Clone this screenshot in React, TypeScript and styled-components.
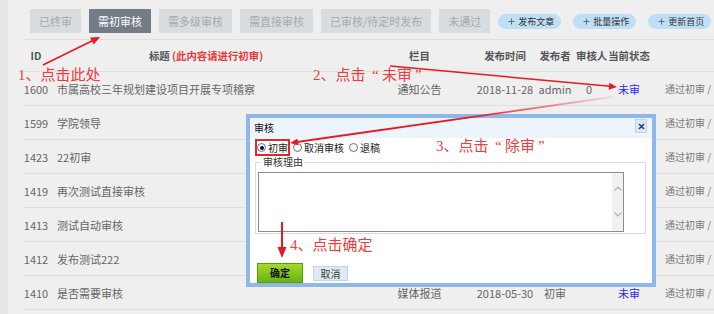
import React from 'react';
import styled, { createGlobalStyle } from 'styled-components';

const SANS = '"Noto Sans CJK SC", "Noto Sans", sans-serif';

const GlobalStyle = createGlobalStyle`
  html, body { margin: 0; padding: 0; background: #efefef; overflow: hidden; }
  body { font-family: ${SANS}; }
  *, *::before, *::after { box-sizing: border-box; }
`;

const Page = styled.div`
  position: relative;
  width: 714px;
  height: 314px;
  overflow: hidden;
  display: flex;
  background: #efefef;
`;

const Sidebar = styled.aside`
  width: 8px;
  flex: none;
  background: #e5e5e5;
`;

const Main = styled.main`
  flex: 1;
  min-width: 0;
  padding-top: 9px;
  display: flex;
  flex-direction: column;
`;

const Toolbar = styled.nav`
  display: flex;
  align-items: center;
  height: 24px;
  margin-left: 22px;
  padding-right: 6px;
  gap: 8px;
`;

const Tab = styled.button<{ $active?: boolean }>`
  height: 24px;
  margin: 0;
  padding: 0 9px;
  border: 0;
  font: 11px/24px ${SANS};
  white-space: nowrap;
  background: ${(p) => (p.$active ? '#737c87' : '#d9dcdf')};
  color: ${(p) => (p.$active ? '#ffffff' : '#a7a9ac')};
`;

const PillGroup = styled.div`
  margin-left: auto;
  display: flex;
  align-items: center;
  gap: 12px;
`;

const Pill = styled.button`
  height: 15px;
  margin: 0;
  padding: 0 7px 0 10px;
  border: 0;
  border-radius: 8px;
  background: #bfdff5;
  display: inline-flex;
  align-items: center;
  gap: 3px;
  font: 9px/15px ${SANS};
  color: #333;
  white-space: nowrap;
`;

const Table = styled.section`
  margin: 6px 0 0 15px;
  display: flex;
  flex-direction: column;
`;

const COLS = '26px 314px 113px 58px 42px 26px 54px 1fr';

const HeaderRow = styled.div`
  display: grid;
  grid-template-columns: ${COLS};
  align-items: center;
  height: 33px;
  border-top: 1px solid #dfdfdf;
  border-bottom: 1px solid #dfdfdf;
  font: bold 10.4px/14px ${SANS};
  color: #555;
`;

const Row = styled.div`
  display: grid;
  grid-template-columns: ${COLS};
  align-items: center;
  height: 34px;
  border-bottom: 1px solid #dedede;
  font: 11px/12px ${SANS};
  color: #666;
`;

const Cell = styled.div<{ $align?: 'left' | 'center'; $pad?: number }>`
  white-space: nowrap;
  text-align: ${(p) => p.$align ?? 'center'};
  padding-left: ${(p) => p.$pad ?? 0}px;
  overflow: visible;
`;

const RedNote = styled.span`
  color: #e83a3a;
`;

const Status = styled.span`
  color: #2b2bff;
`;

const OpText = styled.span`
  font-size: 10px;
  color: #7a7a7a;
`;

/* ---------- dialog ---------- */

const Dialog = styled.section`
  position: absolute;
  left: 246px;
  top: 114px;
  width: 410px;
  height: 173px;
  border: 4px solid #8fb8ea;
  background: #fff;
  display: flex;
  flex-direction: column;
  overflow: hidden;
  font-family: ${SANS};
`;

const DialogTitleBar = styled.header`
  height: 20px;
  flex: none;
  display: flex;
  align-items: flex-start;
  justify-content: space-between;
  padding: 0 5px 0 4px;
  background: #eef4fc;
  font: 10px/20px ${SANS};
  color: #111;
`;

const CloseButton = styled.button`
  margin: 1px 0 0;
  width: 12px;
  height: 14px;
  padding: 0;
  border: 1px solid #c3d3e7;
  background: #dce7f4;
  display: flex;
  align-items: center;
  justify-content: center;
`;

const DialogBody = styled.div`
  flex: 1;
  display: flex;
  flex-direction: column;
  padding: 1px 6px 0 5px;
`;

const RadioRow = styled.div`
  display: flex;
  align-items: center;
  height: 17px;
  gap: 1px;
`;

const RadioOption = styled.label<{ $highlight?: boolean }>`
  display: inline-flex;
  align-items: center;
  gap: 2px;
  height: 17px;
  border: 2px solid ${(p) => (p.$highlight ? '#e62828' : 'transparent')};
  font: 10px/13px ${SANS};
  color: #222;
  white-space: nowrap;
`;

const RadioDot = styled.span<{ $checked?: boolean }>`
  position: relative;
  width: 9px;
  height: 9px;
  flex: none;
  border-radius: 50%;
  border: 1px solid ${(p) => (p.$checked ? '#4f7cae' : '#707070')};
  background: linear-gradient(#f4f4f4, #ffffff);
  &::after {
    content: '';
    display: ${(p) => (p.$checked ? 'block' : 'none')};
    position: absolute;
    left: 1.5px;
    top: 1.5px;
    width: 4px;
    height: 4px;
    border-radius: 50%;
    background: #111;
  }
`;

const ReasonSet = styled.fieldset`
  margin: 1px 0 0;
  padding: 5px 0 1px 2px;
  border: 1px solid #dadada;
  min-width: 0;
`;

const ReasonLegend = styled.legend`
  margin-left: 3px;
  padding: 0 2px;
  font: 10px/10px ${SANS};
  color: #333;
`;

const TextBox = styled.div`
  width: 366px;
  height: 60px;
  border: 1px solid #8c8c8c;
  display: flex;
  background: #fff;
`;

const TextInput = styled.textarea`
  flex: 1;
  border: 0;
  margin: 0;
  padding: 2px;
  resize: none;
  outline: none;
  overflow: hidden;
  font: 10px/14px ${SANS};
  background: transparent;
`;

const ScrollTrack = styled.div`
  width: 11px;
  flex: none;
  background: #f1f1f1;
  display: flex;
  flex-direction: column;
  align-items: center;
  justify-content: space-between;
  padding: 13px 0 14px;
`;

const ButtonRow = styled.div`
  display: flex;
  align-items: center;
  gap: 10px;
  margin-top: 29px;
  padding-left: 2px;
`;

const OkButton = styled.button`
  width: 46px;
  height: 20px;
  margin: 0;
  padding: 0;
  border: 1px solid #5a9c0e;
  background: linear-gradient(#a3da2c, #69b312);
  font: bold 10px/18px ${SANS};
  color: #111;
`;

const CancelButton = styled.button`
  width: 35px;
  height: 15px;
  margin: 0;
  padding: 0;
  border: 1px solid #c6d5e7;
  background: #dfe9f5;
  font: 10px/13px ${SANS};
  color: #3a3a3a;
`;

/* ---------- annotations ---------- */

const Note = styled.span<{ $x: number; $y: number }>`
  position: absolute;
  left: ${(p) => p.$x}px;
  top: ${(p) => p.$y}px;
  font: 15px/14px "Noto Sans CJK SC", serif;
  color: #f23b3b;
  white-space: nowrap;
  pointer-events: none;
`;

const Digit = styled.span`
  font-family: "Liberation Serif", serif;
`;

const Quote = styled.span`
  display: inline-block;
  width: 13px;
  text-align: center;
  font-family: "Liberation Serif", serif;
`;

const ArrowLayer = styled.svg`
  position: absolute;
  left: 0;
  top: 0;
  width: 714px;
  height: 314px;
  pointer-events: none;
`;

type ArrowProps = {
  x1: number; y1: number; x2: number; y2: number;
  len: number; half: number; width: number; stroke: string;
};

function Arrow({ x1, y1, x2, y2, len, half, width, stroke }: ArrowProps) {
  const dx = x2 - x1;
  const dy = y2 - y1;
  const d = Math.hypot(dx, dy);
  const ux = dx / d;
  const uy = dy / d;
  const bx = x2 - ux * len;
  const by = y2 - uy * len;
  const px = -uy;
  const py = ux;
  const head = `${x2},${y2} ${bx + px * half},${by + py * half} ${bx - px * half},${by - py * half}`;
  return (
    <g>
      <line x1={x1} y1={y1} x2={bx + ux} y2={by + uy} stroke={stroke} strokeWidth={width} />
      <polygon points={head} fill="#e8191f" />
    </g>
  );
}

const PlusIcon = () => (
  <svg width="7" height="7" viewBox="0 0 7 7">
    <path d="M3.5 0.5v6M0.5 3.5h6" stroke="#6a6a6a" strokeWidth="1" />
  </svg>
);

const Chevron = ({ up }: { up?: boolean }) => (
  <svg width="8" height="5" viewBox="0 0 8 5">
    <path d={up ? 'M0.5 4.5L4 1L7.5 4.5' : 'M0.5 0.5L4 4L7.5 0.5'} stroke="#b2b2b2" strokeWidth="1.2" fill="none" />
  </svg>
);

const CloseIcon = () => (
  <svg width="7" height="7" viewBox="0 0 7 7">
    <path d="M1 1L6 6M6 1L1 6" stroke="#244477" strokeWidth="1.6" />
  </svg>
);

type Article = {
  id: number; title: string; cat?: string; date?: string;
  author?: string; reviewer?: string; status?: string;
};

/* rows 1599–1412 lie under the dialog: only their id, title and action show */
const articles: Article[] = [
  { id: 1600, title: '市属高校三年规划建设项目开展专项稽察', cat: '通知公告', date: '2018-11-28', author: 'admin', reviewer: '0', status: '未审' },
  { id: 1599, title: '学院领导' },
  { id: 1423, title: '22初审' },
  { id: 1419, title: '再次测试直接审核' },
  { id: 1413, title: '测试自动审核' },
  { id: 1412, title: '发布测试222' },
  { id: 1410, title: '是否需要审核', cat: '媒体报道', date: '2018-05-30', author: '初审', reviewer: '', status: '未审' },
];

const tabs = ['已终审', '需初审核', '需多级审核', '需直接审核', '已审核/待定时发布', '未通过'];
const pills = ['发布文章', '批量操作', '更新首页'];

export default function App() {
  return (
    <>
      <GlobalStyle />
      <Page>
        <Sidebar />
        <Main>
          <Toolbar>
            {tabs.map((t) => (
              <Tab key={t} $active={t === '需初审核'}>{t}</Tab>
            ))}
            <PillGroup>
              {pills.map((p) => (
                <Pill key={p}>
                  <PlusIcon />
                  {p}
                </Pill>
              ))}
            </PillGroup>
          </Toolbar>

          <Table>
            <HeaderRow>
              <Cell>ID</Cell>
              <Cell>标题 <RedNote>(此内容请进行初审)</RedNote></Cell>
              <Cell>栏目</Cell>
              <Cell>发布时间</Cell>
              <Cell>发布者</Cell>
              <Cell>审核人</Cell>
              <Cell>当前状态</Cell>
              <Cell />
            </HeaderRow>
            {articles.map((a) => (
              <Row key={a.id}>
                <Cell>{a.id}</Cell>
                <Cell $align="left" $pad={8}>{a.title}</Cell>
                <Cell>{a.cat}</Cell>
                <Cell>{a.date}</Cell>
                <Cell>{a.author}</Cell>
                <Cell>{a.reviewer}</Cell>
                <Cell>{a.status && <Status>{a.status}</Status>}</Cell>
                <Cell $align="left" $pad={9}><OpText>通过初审 /</OpText></Cell>
              </Row>
            ))}
          </Table>
        </Main>

        <Dialog>
          <DialogTitleBar>
            <span>审核</span>
            <CloseButton aria-label="关闭"><CloseIcon /></CloseButton>
          </DialogTitleBar>
          <DialogBody>
            <RadioRow>
              <RadioOption $highlight><RadioDot $checked />初审</RadioOption>
              <RadioOption><RadioDot />取消审核</RadioOption>
              <RadioOption><RadioDot />退稿</RadioOption>
            </RadioRow>
            <ReasonSet>
              <ReasonLegend>审核理由</ReasonLegend>
              <TextBox>
                <TextInput />
                <ScrollTrack>
                  <Chevron up />
                  <Chevron />
                </ScrollTrack>
              </TextBox>
            </ReasonSet>
            <ButtonRow>
              <OkButton>确定</OkButton>
              <CancelButton>取消</CancelButton>
            </ButtonRow>
          </DialogBody>
        </Dialog>

        <ArrowLayer viewBox="0 0 714 314">
          <defs>
            <linearGradient id="fade3" x1="610" y1="97" x2="290" y2="143" gradientUnits="userSpaceOnUse">
              <stop offset="0" stopColor="#e8191f" stopOpacity="0.1" />
              <stop offset="0.45" stopColor="#e8191f" stopOpacity="1" />
              <stop offset="1" stopColor="#e8191f" stopOpacity="1" />
            </linearGradient>
          </defs>
          <Arrow x1={43} y1={65} x2={100} y2={37} len={9} half={4} width={1.5} stroke="#e8191f" />
          <Arrow x1={390} y1={66} x2={617} y2={87} len={8} half={3.5} width={1.5} stroke="#e8191f" />
          <Arrow x1={612} y1={97} x2={290} y2={143} len={8} half={3.5} width={1.8} stroke="url(#fade3)" />
          <Arrow x1={282} y1={222} x2={282} y2={258} len={11} half={4.5} width={2} stroke="#e8191f" />
        </ArrowLayer>

        <Note $x={18} $y={67}><Digit>1</Digit>、点击此处</Note>
        <Note $x={313} $y={67}><Digit>2</Digit>、点击 <Quote>“</Quote>未审<Quote>”</Quote></Note>
        <Note $x={436} $y={138}><Digit>3</Digit>、点击 <Quote>“</Quote>除审<Quote>”</Quote></Note>
        <Note $x={290} $y={237}><Digit>4</Digit>、点击确定</Note>
      </Page>
    </>
  );
}
